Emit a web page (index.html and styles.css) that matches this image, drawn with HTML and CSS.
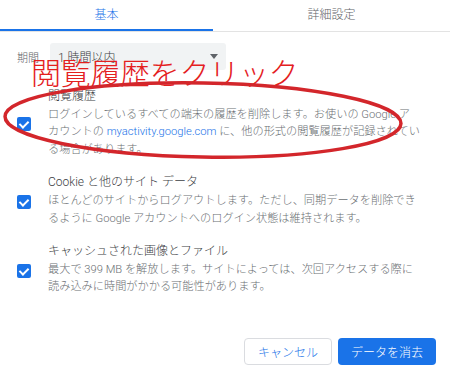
FILE: index.html
```html
<!DOCTYPE html>
<html lang="ja">
    <head>
        <meta charset="UTF-8" />
        <meta name="viewport" content="width=device-width, initial-scale=1.0" />
        <title>閲覧履歴データの削除</title>
        <link rel="stylesheet" href="styles.css">
    </head>
    <body>
        <div class="dialog">
            <div class="tabs">
                <div class="tab active">基本</div>
                <div class="tab">詳細設定</div>
            </div>

            <div class="period">
                <span class="label">期間</span>
                <div class="select">
                    <span>1 時間以内</span>
                    <span class="arrow"></span>
                </div>
            </div>

            <div class="options">
                <div class="option">
                    <span class="check"></span>
                    <div class="text">
                        <div class="title">閲覧履歴</div>
                        <div class="desc">
                            ログインしているすべての端末の履歴を削除します。お使いの Google ア<br>
                            カウントの <span class="link">myactivity.google.com</span> に、他の形式の閲覧履歴が記録されてい<br>
                            る場合があります。
                        </div>
                    </div>
                </div>
                <div class="option">
                    <span class="check"></span>
                    <div class="text">
                        <div class="title">Cookie と他のサイト データ</div>
                        <div class="desc">
                            ほとんどのサイトからログアウトします。ただし、同期データを削除でき<br>
                            るように Google アカウントへのログイン状態は維持されます。
                        </div>
                    </div>
                </div>
                <div class="option">
                    <span class="check"></span>
                    <div class="text">
                        <div class="title">キャッシュされた画像とファイル</div>
                        <div class="desc">
                            最大で 399 MB を解放します。サイトによっては、次回アクセスする際に<br>
                            読み込みに時間がかかる可能性があります。
                        </div>
                    </div>
                </div>
            </div>

            <div class="footer">
                <button class="btn cancel">キャンセル</button>
                <button class="btn primary">データを消去</button>
            </div>

            <!-- annotation drawn on top of the screenshot -->
            <div class="callout">閲覧履歴をクリック</div>
            <svg class="ring" viewBox="0 0 450 375">
                <ellipse cx="203" cy="120" rx="198" ry="37" transform="rotate(1 203 120)" />
            </svg>
        </div>
    </body>
</html>
```

FILE: styles.css
```css
* {
    margin: 0;
    padding: 0;
    box-sizing: border-box;
}
body {
    background: #fff;
    font-family: Roboto, 'Noto Sans CJK JP', sans-serif;
    font-weight: 300;
    color: #3c4043;
}
.dialog {
    position: relative;
    width: 450px;
    height: 375px;
    overflow: hidden;
}
.tabs {
    display: flex;
    height: 32px;
    border-bottom: 1px solid #e3e3e3;
}
.tab {
    display: flex;
    justify-content: center;
    align-items: center;
    padding-bottom: 5px;
    font-size: 12px;
    color: #5f6368;
    flex: 1;
}
.tab.active {
    flex: 0 0 213px;
    color: #1a73e8;
    box-shadow: inset 0 -2px 0 #1a73e8;
}
.period {
    display: flex;
    align-items: center;
    margin-top: 11px;
    padding-left: 17px;
    height: 27px;
}
.period .label {
    font-size: 11px;
    color: #5f6368;
    width: 33px;
}
.select {
    display: flex;
    justify-content: space-between;
    align-items: center;
    width: 176px;
    height: 27px;
    padding: 0 8px;
    background: #f1f3f4;
    border-radius: 3px;
    font-size: 12px;
}
.select .arrow {
    width: 0;
    height: 0;
    border-left: 4px solid transparent;
    border-right: 4px solid transparent;
    border-top: 5px solid #5f6368;
}
.options {
    padding: 18px 0 0 17px;
    display: flex;
    flex-direction: column;
    gap: 16px;
}
.option {
    display: flex;
    align-items: center;
    gap: 17px;
}
.check {
    position: relative;
    flex: 0 0 14px;
    height: 14px;
    background: #1a73e8;
    border-radius: 2px;
    margin-top: 2px;
}
.check::after {
    content: '';
    position: absolute;
    left: 4px;
    top: 2px;
    width: 4px;
    height: 7px;
    border-right: 2px solid #fff;
    border-bottom: 2px solid #fff;
    transform: rotate(45deg);
}
.text {
    line-height: 17.6px;
    white-space: nowrap;
}
.title {
    font-size: 12px;
    color: #3c4043;
}
.desc {
    font-size: 11.2px;
    color: #6b6f73;
}
.link {
    color: #1a73e8;
}
.footer {
    display: flex;
    justify-content: flex-end;
    gap: 6px;
    margin-top: 42px;
    padding-right: 14px;
}
.btn {
    height: 27px;
    border-radius: 4px;
    font-family: Roboto, 'Noto Sans CJK JP', sans-serif;
    font-weight: 300;
    font-size: 12px;
}
.btn.cancel {
    width: 88px;
    background: #fff;
    border: 1px solid #dadce0;
    color: #1a73e8;
}
.btn.primary {
    width: 98px;
    background: #1a73e8;
    border: none;
    color: #fff;
}
.callout {
    position: absolute;
    left: 31px;
    top: 49px;
    font-family: 'Noto Sans CJK JP', sans-serif;
    font-weight: 300;
    font-size: 30px;
    letter-spacing: -0.3px;
    color: #e4201e;
    white-space: nowrap;
}
.ring {
    position: absolute;
    left: 0;
    top: 0;
    width: 450px;
    height: 375px;
    pointer-events: none;
}
.ring ellipse {
    fill: none;
    stroke: #d3262b;
    stroke-width: 3.5;
}
```
